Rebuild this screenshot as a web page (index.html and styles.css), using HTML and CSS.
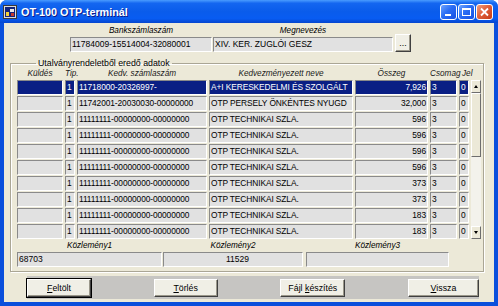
FILE: index.html
```html
<!DOCTYPE html>
<html lang="hu">
<head>
    <meta charset="UTF-8">
    <title>OT-100 OTP-terminál</title>
    <link rel="stylesheet" href="styles.css">
</head>
<body>
    <div class="window">
        <div class="titlebar">
            <svg class="app-icon" width="14" height="14" viewBox="0 0 14 14">
                <rect x="0.5" y="0.5" width="13" height="13" fill="#dcdcdc" stroke="#3a3a3a"/>
                <rect x="2" y="2" width="10" height="10" fill="#14247a"/>
                <rect x="3" y="7" width="3" height="4" fill="#f2d23c"/>
                <rect x="7" y="4" width="4" height="3" fill="#e8e8e8"/>
                <rect x="8" y="8" width="3" height="3" fill="#c83a2a"/>
            </svg>
            <span class="title">OT-100 OTP-terminál</span>
            <div class="caption-buttons">
                <span class="cbtn">
                    <svg width="15" height="14" viewBox="0 0 15 14"><rect x="4" y="9" width="6" height="2" fill="#fff"/></svg>
                </span>
                <span class="cbtn">
                    <svg width="15" height="14" viewBox="0 0 15 14"><rect x="3.5" y="3.5" width="8" height="7" fill="none" stroke="#fff"/><rect x="3" y="3" width="9" height="2" fill="#fff"/></svg>
                </span>
                <span class="cbtn close">
                    <svg width="15" height="14" viewBox="0 0 15 14"><path d="M4 3.5 L11 10.5 M11 3.5 L4 10.5" stroke="#fff" stroke-width="1.8"/></svg>
                </span>
            </div>
        </div>

        <div class="client">
            <div class="account">
                <div class="labeled bank">
                    <div class="lbl">Bankszámlaszám</div>
                    <div class="field">11784009-15514004-32080001</div>
                </div>
                <div class="labeled owner">
                    <div class="lbl">Megnevezés</div>
                    <div class="field">XIV. KER. ZUGLÓI GESZ</div>
                </div>
                <span class="btn dots">...</span>
            </div>

            <fieldset class="group">
                <legend>Utalványrendeletből eredő adatok</legend>

                <div class="grid">
                    <div class="scrollbar">
                        <span class="sbtn up"></span>
                        <span class="thumb"></span>
                        <span class="track"></span>
                        <span class="sbtn down"></span>
                    </div>

                    <div class="colhead">Küldés</div>
                    <div class="colhead">Tip.</div>
                    <div class="colhead">Kedv. számlaszám</div>
                    <div class="colhead">Kedvezményezett neve</div>
                    <div class="colhead">Összeg</div>
                    <div class="colhead">Csomag</div>
                    <div class="colhead jel">Jel</div>
                    <div></div>

                    <div class="cell sel"></div>
                    <div class="cell sel">1</div>
                    <div class="cell sel">11718000-20326997-</div>
                    <div class="cell sel">A+I KERESKEDELMI ÉS SZOLGÁLT</div>
                    <div class="cell sel num">7,926</div>
                    <div class="cell sel">3</div>
                    <div class="cell sel">0</div>

                    <div class="cell"></div>
                    <div class="cell">1</div>
                    <div class="cell">11742001-20030030-00000000</div>
                    <div class="cell">OTP PERSELY ÖNKÉNTES NYUGD</div>
                    <div class="cell num">32,000</div>
                    <div class="cell">3</div>
                    <div class="cell">0</div>

                    <div class="cell"></div>
                    <div class="cell">1</div>
                    <div class="cell">11111111-00000000-00000000</div>
                    <div class="cell">OTP TECHNIKAI SZLA.</div>
                    <div class="cell num">596</div>
                    <div class="cell">3</div>
                    <div class="cell">0</div>

                    <div class="cell"></div>
                    <div class="cell">1</div>
                    <div class="cell">11111111-00000000-00000000</div>
                    <div class="cell">OTP TECHNIKAI SZLA.</div>
                    <div class="cell num">596</div>
                    <div class="cell">3</div>
                    <div class="cell">0</div>

                    <div class="cell"></div>
                    <div class="cell">1</div>
                    <div class="cell">11111111-00000000-00000000</div>
                    <div class="cell">OTP TECHNIKAI SZLA.</div>
                    <div class="cell num">596</div>
                    <div class="cell">3</div>
                    <div class="cell">0</div>

                    <div class="cell"></div>
                    <div class="cell">1</div>
                    <div class="cell">11111111-00000000-00000000</div>
                    <div class="cell">OTP TECHNIKAI SZLA.</div>
                    <div class="cell num">596</div>
                    <div class="cell">3</div>
                    <div class="cell">0</div>

                    <div class="cell"></div>
                    <div class="cell">1</div>
                    <div class="cell">11111111-00000000-00000000</div>
                    <div class="cell">OTP TECHNIKAI SZLA.</div>
                    <div class="cell num">373</div>
                    <div class="cell">3</div>
                    <div class="cell">0</div>

                    <div class="cell"></div>
                    <div class="cell">1</div>
                    <div class="cell">11111111-00000000-00000000</div>
                    <div class="cell">OTP TECHNIKAI SZLA.</div>
                    <div class="cell num">373</div>
                    <div class="cell">3</div>
                    <div class="cell">0</div>

                    <div class="cell"></div>
                    <div class="cell">1</div>
                    <div class="cell">11111111-00000000-00000000</div>
                    <div class="cell">OTP TECHNIKAI SZLA.</div>
                    <div class="cell num">183</div>
                    <div class="cell">3</div>
                    <div class="cell">0</div>

                    <div class="cell"></div>
                    <div class="cell">1</div>
                    <div class="cell">11111111-00000000-00000000</div>
                    <div class="cell">OTP TECHNIKAI SZLA.</div>
                    <div class="cell num">183</div>
                    <div class="cell">3</div>
                    <div class="cell">0</div>
                </div>

                <div class="notes">
                    <div class="labeled note1">
                        <div class="lbl">Közlemény1</div>
                        <div class="field">68703</div>
                    </div>
                    <div class="labeled note2">
                        <div class="lbl">Közlemény2</div>
                        <div class="field center">11529</div>
                    </div>
                    <div class="labeled note3">
                        <div class="lbl">Közlemény3</div>
                        <div class="field"></div>
                    </div>
                </div>
            </fieldset>

            <div class="actions">
                <span class="btn default w-feltolt"><span><u>F</u>eltölt</span></span>
                <span class="btn w-torles"><span><u>T</u>örlés</span></span>
                <span class="btn w-fajl"><span>Fájl <u>k</u>észítés</span></span>
                <span class="btn w-vissza"><span><u>V</u>issza</span></span>
            </div>
        </div>
    </div>
</body>
</html>
```

FILE: styles.css
```css
body {
    margin: 0;
    font-family: "Liberation Sans", Arial, sans-serif;
    font-size: 8.8px;
    color: #000;
    background: #fff;
}

.window {
    width: 498px;
    height: 306px;
    display: flex;
    flex-direction: column;
    background: #0a4fdc;
    border-radius: 7px 7px 0 0;
    overflow: hidden;
}

/* title bar */
.titlebar {
    height: 23px;
    flex: none;
    display: flex;
    align-items: center;
    padding-left: 3px;
    background: linear-gradient(to bottom, #4a9cff 0%, #1466f0 14%, #0a5ceb 50%, #085cf2 80%, #0546cf 100%);
}
.app-icon {
    flex: none;
    margin-top: 1px;
}
.title {
    margin-left: 4px;
    color: #fff;
    font-weight: bold;
    font-size: 10.8px;
    text-shadow: 1px 1px #0b1a8a;
}
.caption-buttons {
    margin-left: auto;
    padding-right: 5px;
    display: flex;
    gap: 1px;
}
.cbtn {
    width: 17px;
    height: 16px;
    box-sizing: border-box;
    border: 1px solid #fff;
    border-radius: 3px;
    display: flex;
    align-items: center;
    justify-content: center;
    background: linear-gradient(135deg, #6ea4ff 0%, #2a6df4 45%, #1650e4 100%);
}
.cbtn.close {
    background: linear-gradient(135deg, #f0a080 0%, #e0603a 45%, #c63c16 100%);
}

/* client area */
.client {
    flex: 1;
    margin: 0 4px 4px;
    background: #ece9d8;
    display: flex;
    flex-direction: column;
}

.labeled {
    display: flex;
    flex-direction: column;
}
.lbl {
    font-style: italic;
    font-size: 8.2px;
    line-height: 10px;
    margin-bottom: 1px;
    text-align: center;
    white-space: nowrap;
}
.field {
    height: 15px;
    box-sizing: border-box;
    border: 1px solid;
    border-color: #8a8a8a #fff #fff #8a8a8a;
    background: #e1e1e1;
    line-height: 13px;
    padding: 0 1px;
    font-size: 8.5px;
    white-space: nowrap;
    overflow: hidden;
}
.field.center {
    text-align: center;
    padding-left: 10px;
}

.account {
    display: flex;
    align-items: flex-end;
    padding: 3px 0 0 66px;
}
.bank { width: 142px; }
.owner { width: 180px; margin-left: 1px; }
.dots {
    width: 16px;
    height: 16px;
    margin-left: 2px;
    line-height: 10px;
}

/* group box */
.group {
    margin: 6px 10px 0 6px;
    padding: 1px 0 4px 6px;
    border: 1px solid #aaa695;
    box-shadow: inset 1px 1px #fff, 1px 1px #fff;
    min-width: 0;
}
.group legend {
    margin-left: 19px;
    padding: 0 2px;
    line-height: 10px;
    font-size: 8.8px;
}

.grid {
    display: grid;
    grid-template-columns: 46px 10px 130px 144px 73px 27px 10px 10px;
    grid-auto-rows: 15px;
    grid-template-rows: 10px;
    column-gap: 2px;
    row-gap: 1px;
}
.colhead {
    font-style: italic;
    font-size: 8.2px;
    line-height: 10px;
    text-align: center;
    white-space: nowrap;
    color: #1a1a1a;
}
.colhead.jel {
    padding-left: 3px;
    text-align: left;
}
.cell {
    box-sizing: border-box;
    border: 1px solid;
    border-color: #8a8a8a #fff #fff #8a8a8a;
    background: #e1e1e1;
    line-height: 13px;
    padding: 0 1px;
    font-size: 8.4px;
    letter-spacing: -0.1px;
    white-space: nowrap;
    overflow: hidden;
}
.cell.num {
    text-align: right;
}
.cell.sel {
    background: #0a1f84;
    color: #fff;
}

/* scrollbar */
.scrollbar {
    grid-column: 8;
    grid-row: 2 / 12;
    display: flex;
    flex-direction: column;
    background: #f3f2ec;
}
.sbtn, .thumb {
    box-sizing: border-box;
    border: 1px solid;
    border-color: #fff #6e6e6e #6e6e6e #fff;
    background: #ece9d8;
}
.sbtn {
    height: 13px;
    flex: none;
    display: flex;
    align-items: center;
    justify-content: center;
}
.sbtn::before {
    content: "";
    border-left: 2px solid transparent;
    border-right: 2px solid transparent;
}
.sbtn.up::before { border-bottom: 3px solid #000; }
.sbtn.down::before { border-top: 3px solid #000; }
.thumb {
    height: 64px;
    flex: none;
}
.track {
    flex: 1;
}

/* messages */
.notes {
    display: flex;
    margin-top: 2px;
}
.note1 { width: 145px; }
.note2 { width: 140px; margin-left: 1px; }
.note3 { width: 143px; margin-left: 3px; }

/* buttons */
.btn {
    box-sizing: border-box;
    height: 18px;
    display: flex;
    align-items: center;
    justify-content: center;
    border: 1px solid;
    border-color: #fff #404040 #404040 #fff;
    box-shadow: inset -1px -1px #9a978a;
    background: #f0efe6;
    white-space: nowrap;
}
.btn.default {
    outline: 1px solid #000;
    outline-offset: 0;
}
.actions {
    margin: 4px 15px 0 23px;
    height: 23px;
    display: flex;
    align-items: center;
    justify-content: space-between;
    background: #c6c5c2;
}
.w-feltolt { width: 64px; }
.w-torles { width: 64px; }
.w-fajl { width: 65px; }
.w-vissza { width: 71px; }
```
